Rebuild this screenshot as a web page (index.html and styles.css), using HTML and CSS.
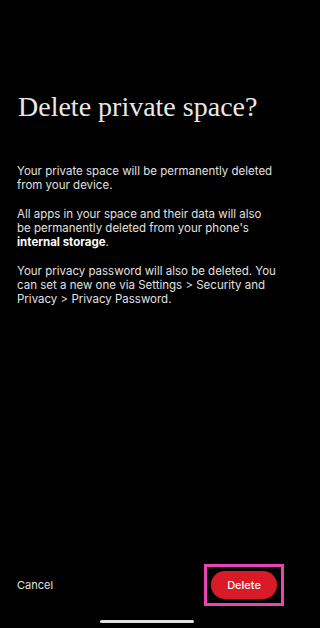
FILE: index.html
```html
<!DOCTYPE html>
<html lang="en">
<head>
<meta charset="utf-8">
<title>Delete private space?</title>
<link rel="stylesheet" href="styles.css">
</head>
<body>
<div class="screen">
  <main class="content">
    <h1 class="title">Delete private space?</h1>
    <p class="para">Your private space will be permanently deleted from your device.</p>
    <p class="para">All apps in your space and their data will also be permanently deleted from your phone's <strong>internal storage</strong>.</p>
    <p class="para">Your privacy password will also be deleted. You can set a new one via Settings &gt; Security and Privacy &gt; Privacy Password.</p>
  </main>
  <footer class="actions">
    <button class="btn-cancel" type="button">Cancel</button>
    <span class="highlight"><button class="btn-delete" type="button">Delete</button></span>
  </footer>
  <div class="home-bar"></div>
</div>
</body>
</html>
```
FILE: styles.css
```css
html, body {
  margin: 0;
  padding: 0;
  background: #000;
}
.screen {
  width: 294px;
  height: 628px;
  display: flex;
  flex-direction: column;
  background: #000;
  font-family: Inter, "Noto Sans", sans-serif;
  color: #e2e2e2;
  overflow: hidden;
}
.content {
  flex: 1;
  padding: 90px 18px 0 17px;
}
.title {
  margin: 0 0 40px 1px;
  font-family: "Liberation Serif", "Times New Roman", serif;
  font-weight: 400;
  font-size: 28px;
  line-height: 34px;
  color: #e8e8e8;
}
.para {
  margin: 0 0 15px;
  font-size: 11.5px;
  line-height: 14px;
  color: #e0e0e0;
}
.para strong {
  font-weight: 700;
  color: #fff;
}
.actions {
  display: flex;
  align-items: center;
  justify-content: space-between;
  padding: 0 10px 0 17px;
}
.btn-cancel {
  background: none;
  border: 0;
  padding: 0;
  font-family: inherit;
  font-size: 11px;
  color: #e0e0e0;
}
.highlight {
  display: flex;
  padding: 4px;
  border: 3px solid #e645b4;
}
.btn-delete {
  width: 66px;
  height: 28px;
  border: 0;
  border-radius: 14px;
  background: #d81b27;
  color: #fff;
  font-family: inherit;
  font-size: 11px;
  font-weight: 500;
  padding: 0;
}
.home-bar {
  align-self: center;
  width: 94px;
  height: 3px;
  border-radius: 2px;
  background: #e0e0e0;
  margin: 14px 0 5px;
}
```
